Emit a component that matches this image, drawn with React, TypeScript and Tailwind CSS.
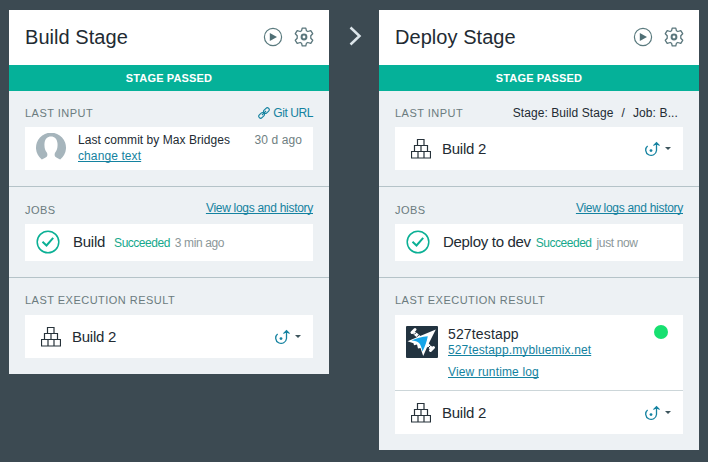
import type { ReactNode } from "react";

function PlayIcon() {
  return (
    <svg width="20" height="20" viewBox="0 0 20 20" fill="none">
      <circle cx="10" cy="10" r="8.6" stroke="#5a7a7e" strokeWidth="1.2" />
      <path d="M6.8 6.1 14 10l-7.2 3.900z" fill="#4f6f75" />
    </svg>
  );
}

function GearIcon() {
  return (
    <svg width="20" height="20" viewBox="0 0 20 20" fill="none" stroke="#5a767c" strokeLinejoin="round">
      <path
        strokeWidth="1.3"
        d="M8.200 1.200h3.600l.6 2.500 1.400.8 3-.9 1.900 3.100-1.900 2.100v2.400l1.900 2.100-1.900 3.100-3-.9-1.400.8-.6 2.500H8.200l-.6-2.500-1.400-.8-3 .9-1.900-3.100 1.900-2.100V8.800l-1.900-2.100 1.900-3.100 3 .9 1.400-.8z"
      />
      <circle cx="10" cy="10" r="2.4" strokeWidth="2" />
    </svg>
  );
}

function ChainIcon() {
  return (
    <svg width="12" height="12" viewBox="0 0 12 12" fill="none" stroke="#1482a0" strokeWidth="1.100">
      <rect x="-3.200" y="-1.900" width="6.400" height="3.800" rx="1.900" transform="translate(8.400 3.600) rotate(-45)" />
      <rect x="-3.200" y="-1.900" width="6.400" height="3.800" rx="1.900" transform="translate(3.600 8.400) rotate(-45)" />
      <path d="M4 8l4-4" />
    </svg>
  );
}

function AvatarIcon() {
  return (
    <svg width="30" height="27" viewBox="0 0 30 27">
      <path
        fill="#a6b5bc"
        d="M5.800 26.500A15 15 0 1 1 24.200 26.500C23 25.800 20.500 25 19.300 23.800C18.300 22.500 18.500 21 19.200 19.600C21 17.500 21.800 14.500 21.500 10.500C21.200 6 18.500 3.500 15 3.500S8.800 6 8.500 10.500C8.200 14.500 9 17.500 10.800 19.600C11.500 21 11.700 22.500 10.700 23.800C9.500 25 7 25.800 5.800 26.500Z"
      />
    </svg>
  );
}

function CheckIcon() {
  return (
    <svg className="-mt-[2px]" width="24" height="24" viewBox="0 0 24 24" fill="none" stroke="#0bb095">
      <circle cx="12" cy="12" r="10.800" strokeWidth="1.500" />
      <path d="M6.500 11.800l4 3.700 6.700-7.700" strokeWidth="2" />
    </svg>
  );
}

function BlocksIcon() {
  return (
    <svg width="20" height="20" viewBox="0 0 20 20" fill="none" stroke="#27323a" strokeWidth="1.200">
      <path d="M6.500.5h6.500v6H6.500zM3.500 6.500h6.500v6H3.500zM10 6.500h6.500v6H10zM.5 12.500h6.500v6.500H.5zM7 12.500h6v6.500H7zM13 12.500h6.500v6.500H13z" />
    </svg>
  );
}

function DeployMenu() {
  return (
    <div className="flex items-start gap-[5px]">
      <svg width="15" height="16" viewBox="0 0 15 16" fill="none" stroke="#1482a0" strokeWidth="1.300">
        <path d="M2.600 4.900A5.400 5.400 0 1 0 11.500 9.500V1.800M8.500 4.600l3-3 3 3" />
        <circle cx="6" cy="9.600" r="1.400" fill="#1482a0" stroke="none" />
      </svg>
      <svg className="mt-[6px]" width="6" height="3" viewBox="0 0 6 3">
        <path d="M0 0h6L3 3z" fill="#3d555d" />
      </svg>
    </div>
  );
}

function AppLogo() {
  return (
    <svg width="32" height="32" viewBox="0 0 32 32">
      <rect width="32" height="32" rx="1" fill="#223340" />
      <g stroke="#fff" strokeLinecap="round">
        <path d="M9 7.500L25 22" strokeWidth="3.500" />
        <path d="M6 6.500l3-3M24.500 24.500l3-3" strokeWidth="3" />
      </g>
      <path d="M8.200 8.500l3-3M11 10.800l3-3M21.500 22.500l3-3" stroke="#223340" strokeWidth="1" />
      <path d="M29.800 3.500L1.500 15.200l6 2 .5 2 3-.700 1 4 2.500-.500L17.200 30 22.500 18z" fill="#fff" />
      <path d="M21.800 10.300C16 10.500 10 12.500 5.500 14.500c3.500.3 6 1 7.500 2.500s2.500 4 3.500 8.500c2.500-5 4.300-9.500 5.300-15.200z" fill="#16a5e8" />
    </svg>
  );
}

function Label({ children }: { children: ReactNode }) {
  return <span className="text-[11px] tracking-[0.48px] text-[#6b7b7e]">{children}</span>;
}

function Section({ children, className = "" }: { children: ReactNode; className?: string }) {
  return <section className={`border-b border-[#b5c3c8] px-4 ${className}`}>{children}</section>;
}

function BuildRow() {
  return (
    <div className="flex h-[43px] items-start bg-white pl-4 pr-3">
      <div className="pt-3">
        <BlocksIcon />
      </div>
      <span className="ml-[11px] mt-3 text-[15px] leading-5 tracking-[-0.25px] text-[#222b33]">Build 2</span>
      <div className="ml-auto pt-[14px]">
        <DeployMenu />
      </div>
    </div>
  );
}

const link = "text-[#1482a0] underline underline-offset-[1px] [text-decoration-skip-ink:none]";

function Jobs({ name, when, nameClass, gapClass }: { name: string; when: string; nameClass: string; gapClass: string }) {
  return (
    <Section className="h-[91px]">
      <div className="flex h-[37px] items-start justify-between pt-[13px] leading-4">
        <span className="pt-px">
          <Label>JOBS</Label>
        </span>
        <a className={`text-[12px] leading-4 tracking-[-0.29px] ${link}`}>View logs and history</a>
      </div>
      <div className="flex h-[37px] items-center bg-white pl-[11px]">
        <CheckIcon />
        <span className={`-mt-px text-[15px] leading-5 text-[#222b33] ${nameClass}`}>{name}</span>
        <span className={`text-[12px] tracking-[-0.48px] text-[#16a88c] ${gapClass}`}>Succeeded</span>
        <span className="ml-[5px] text-[12px] tracking-[-0.38px] text-[#8b9799]">{when}</span>
      </div>
    </Section>
  );
}

function Stage({ title, children }: { title: string; children: ReactNode }) {
  return (
    <article className="w-[320px] bg-[#edf1f4]">
      <header className="flex h-[55px] items-center bg-white pb-[2px] pl-4 pr-[15px]">
        <h2 className="mr-auto text-[20px] leading-6 tracking-[0.05px] text-[#222b33]">{title}</h2>
        <PlayIcon />
        <span className="ml-[11px]">
          <GearIcon />
        </span>
      </header>
      <div className="flex h-[26px] items-center justify-center bg-[#05b199] text-[11px] font-bold tracking-[0.15px] text-white">
        STAGE PASSED
      </div>
      {children}
    </article>
  );
}

export default function App() {
  return (
    <main className="flex h-[462px] w-[708px] items-start bg-[#3c4a52] pl-[9px] pt-[10px] font-['Liberation_Sans',Arial,sans-serif]">
      <Stage title="Build Stage">
        <Section className="h-24">
          <div className="flex h-9 items-start justify-between pt-[14px] leading-4">
            <Label>LAST INPUT</Label>
            <a className="flex items-center gap-[3px] text-[12px] leading-4 tracking-[-0.42px] text-[#1482a0]">
              <ChainIcon />
              Git URL
            </a>
          </div>
          <div className="flex h-[43px] items-start bg-white pl-[11px] pr-[11px] text-[12px] leading-4">
            <div className="pt-[6px]">
              <AvatarIcon />
            </div>
            <div className="ml-3 mt-[5px] flex flex-col items-start">
              <span className="tracking-[0.05px] text-[#222b33]">Last commit by Max Bridges</span>
              <a className={`tracking-[0.1px] ${link}`}>change text</a>
            </div>
            <span className="ml-auto mt-[5px] tracking-[0.1px] text-[#6f7f82]">30 d ago</span>
          </div>
        </Section>
        <Jobs name="Build" when="3 min ago" nameClass="ml-[13px] tracking-[-0.25px]" gapClass="ml-[9px]" />
        <section className="h-24 px-4 pt-[13px]">
          <div className="h-6 leading-4">
            <Label>LAST EXECUTION RESULT</Label>
          </div>
          <BuildRow />
        </section>
      </Stage>

      <div className="flex w-[50px] justify-center pl-[2px] pt-4">
        <svg width="14" height="20" viewBox="0 0 14 20" fill="none" stroke="#dce5ea" strokeWidth="2.500">
          <path d="M2.500 1.500L11.500 10l-9 8.500" />
        </svg>
      </div>

      <Stage title="Deploy Stage">
        <Section className="h-24">
          <div className="flex h-9 items-start pt-[14px] leading-4">
            <Label>LAST INPUT</Label>
            <span className="ml-auto text-[12px] tracking-[0.08px] text-[#222b33]">Stage: Build Stage</span>
            <span className="mx-2 text-[12px] text-[#222b33]">/</span>
            <span className="mr-[5px] text-[12px] tracking-[0.12px] text-[#222b33]">Job: B...</span>
          </div>
          <BuildRow />
        </Section>
        <Jobs name="Deploy to dev" when="just now" nameClass="ml-[13px] tracking-[-0.3px]" gapClass="ml-[5px]" />
        <section className="h-[172px] px-4 pt-[13px]">
          <div className="h-6 leading-4">
            <Label>LAST EXECUTION RESULT</Label>
          </div>
          <div className="flex h-[76px] items-start border-b border-[#ccd6d9] bg-white pl-[11px] pr-[15px] pt-[11px]">
            <AppLogo />
            <div className="ml-[10px] flex flex-col items-start text-[12px] leading-4">
              <span className="text-[14px] leading-4 tracking-[0.15px] text-[#222b33]">527testapp</span>
              <a className={`tracking-[0.13px] ${link}`}>527testapp.mybluemix.net</a>
              <a className={`mt-[6px] tracking-[0.15px] ${link}`}>View runtime log</a>
            </div>
            <span className="-mt-[1px] ml-auto size-[14px] rounded-full bg-[#17e070]" />
          </div>
          <BuildRow />
        </section>
      </Stage>
    </main>
  );
}
